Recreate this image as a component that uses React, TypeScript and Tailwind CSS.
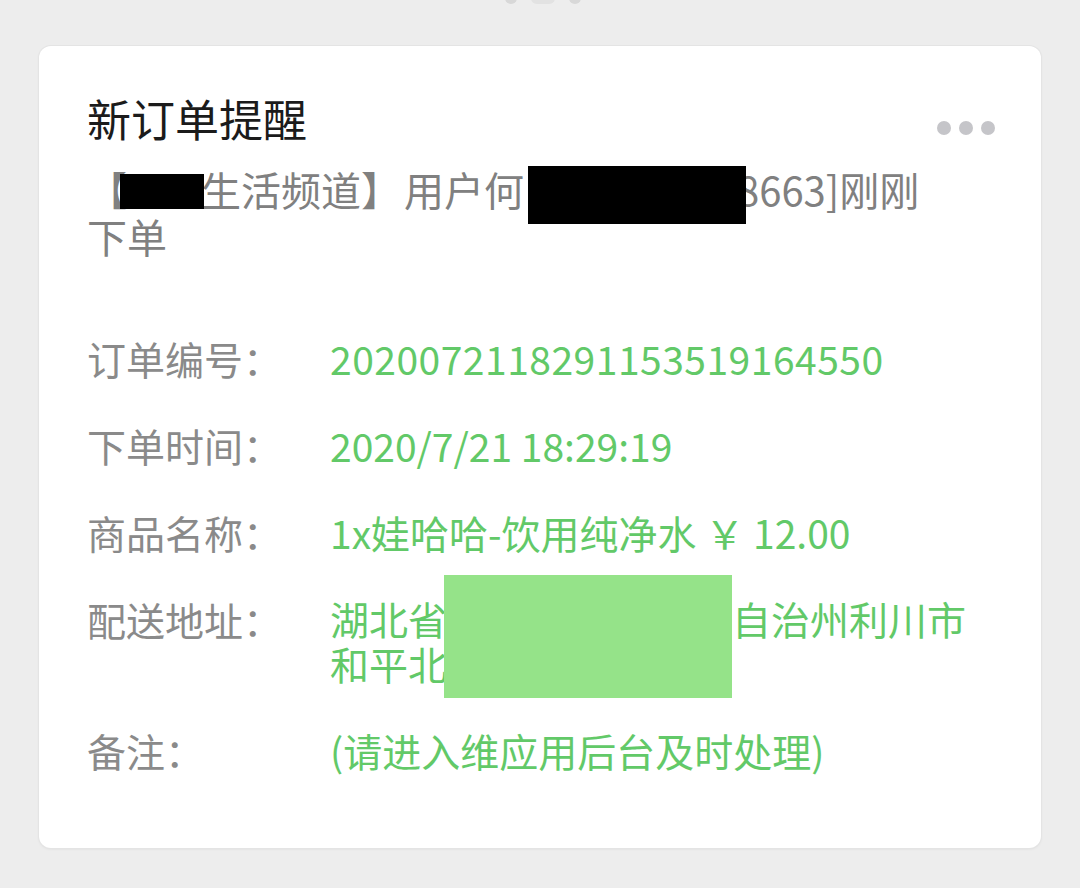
const green = 'text-[#62c968]'

function Row({ label, children }: { label: string; children: React.ReactNode }) {
  return (
    <div className="flex">
      <div className="w-[243px] shrink-0 text-[#8a8a8a]">{label}</div>
      <div className={`relative flex-1 ${green}`}>{children}</div>
    </div>
  )
}

// black redaction that does not change the line box
function Redact({ w, top, h, className = '' }: { w: number; top: number; h: number; className?: string }) {
  return (
    <span className={`relative z-10 inline-block h-0 align-baseline ${className}`} style={{ width: w }}>
      <span className="absolute left-0 w-full bg-black" style={{ top, height: h }} />
    </span>
  )
}

export default function App() {
  return (
    <div
      className="min-h-[888px] bg-[#ededed] pb-[40px]"
      style={{ fontFamily: '"Noto Sans CJK SC", "Noto Sans", sans-serif' }}
    >
      {/* clipped marks at the very top */}
      <div className="flex h-[5px] justify-center gap-[14px] overflow-hidden pl-[6px]">
        <div className="-mt-[8px] h-[12px] w-[12px] rounded-full bg-[#d8d8d8]" />
        <div className="-mt-[8px] h-[12px] w-[24px] rounded-full bg-[#e2e2e2]" />
        <div className="-mt-[8px] h-[12px] w-[12px] rounded-full bg-[#d8d8d8]" />
      </div>

      <div className="ml-[39px] mt-[41px] w-[1002px] rounded-[12px] bg-white px-[48px] pb-[75px] pt-[44px] shadow-[0_1px_3px_rgba(0,0,0,0.08)] ring-1 ring-[#e4e4e4]">
        <div className="flex items-start justify-between">
          <h1 className="text-[44px] leading-[56px] text-[#1b1b1b]">新订单提醒</h1>
          <div className="mr-[-2px] mt-[31px] flex gap-[8px]">
            <span className="h-[14px] w-[14px] rounded-full bg-[#c5c5c9]" />
            <span className="h-[14px] w-[14px] rounded-full bg-[#c5c5c9]" />
            <span className="h-[14px] w-[14px] rounded-full bg-[#c5c5c9]" />
          </div>
        </div>

        <p className="mt-[20px] w-[850px] text-[40px] leading-[47px] text-[#808080]">
          【<Redact w={84} top={-32} h={35} className="-ml-[7px] -mr-[3px]" />生活频道】<span className="ml-[3px]">用户何</span>
          <Redact w={218} top={-40} h={58} className="ml-[4px]" />
          <span className="-ml-[9px]">8663]刚刚下单</span>
        </p>

        <div className="mt-[75px] flex flex-col gap-[41px] text-[39px] leading-[46px]">
          <Row label="订单编号：">
            <span className="tracking-[0.5px]">2020072118291153519164550</span>
          </Row>
          <Row label="下单时间：">2020/7/21 18:29:19</Row>
          <Row label="商品名称：">1x娃哈哈-饮用纯净水 ￥ 12.00</Row>
          <Row label="配送地址：">
            <div className="w-[650px] leading-[45px]">
              湖北省<span className="inline-block w-[285px]" />自治州利川市和平北路
            </div>
            <div className="absolute left-[114px] top-[-21px] h-[123px] w-[288px] bg-[#95e389]" />
          </Row>
          <Row label="备注：">(请进入维应用后台及时处理)</Row>
        </div>
      </div>
    </div>
  )
}
